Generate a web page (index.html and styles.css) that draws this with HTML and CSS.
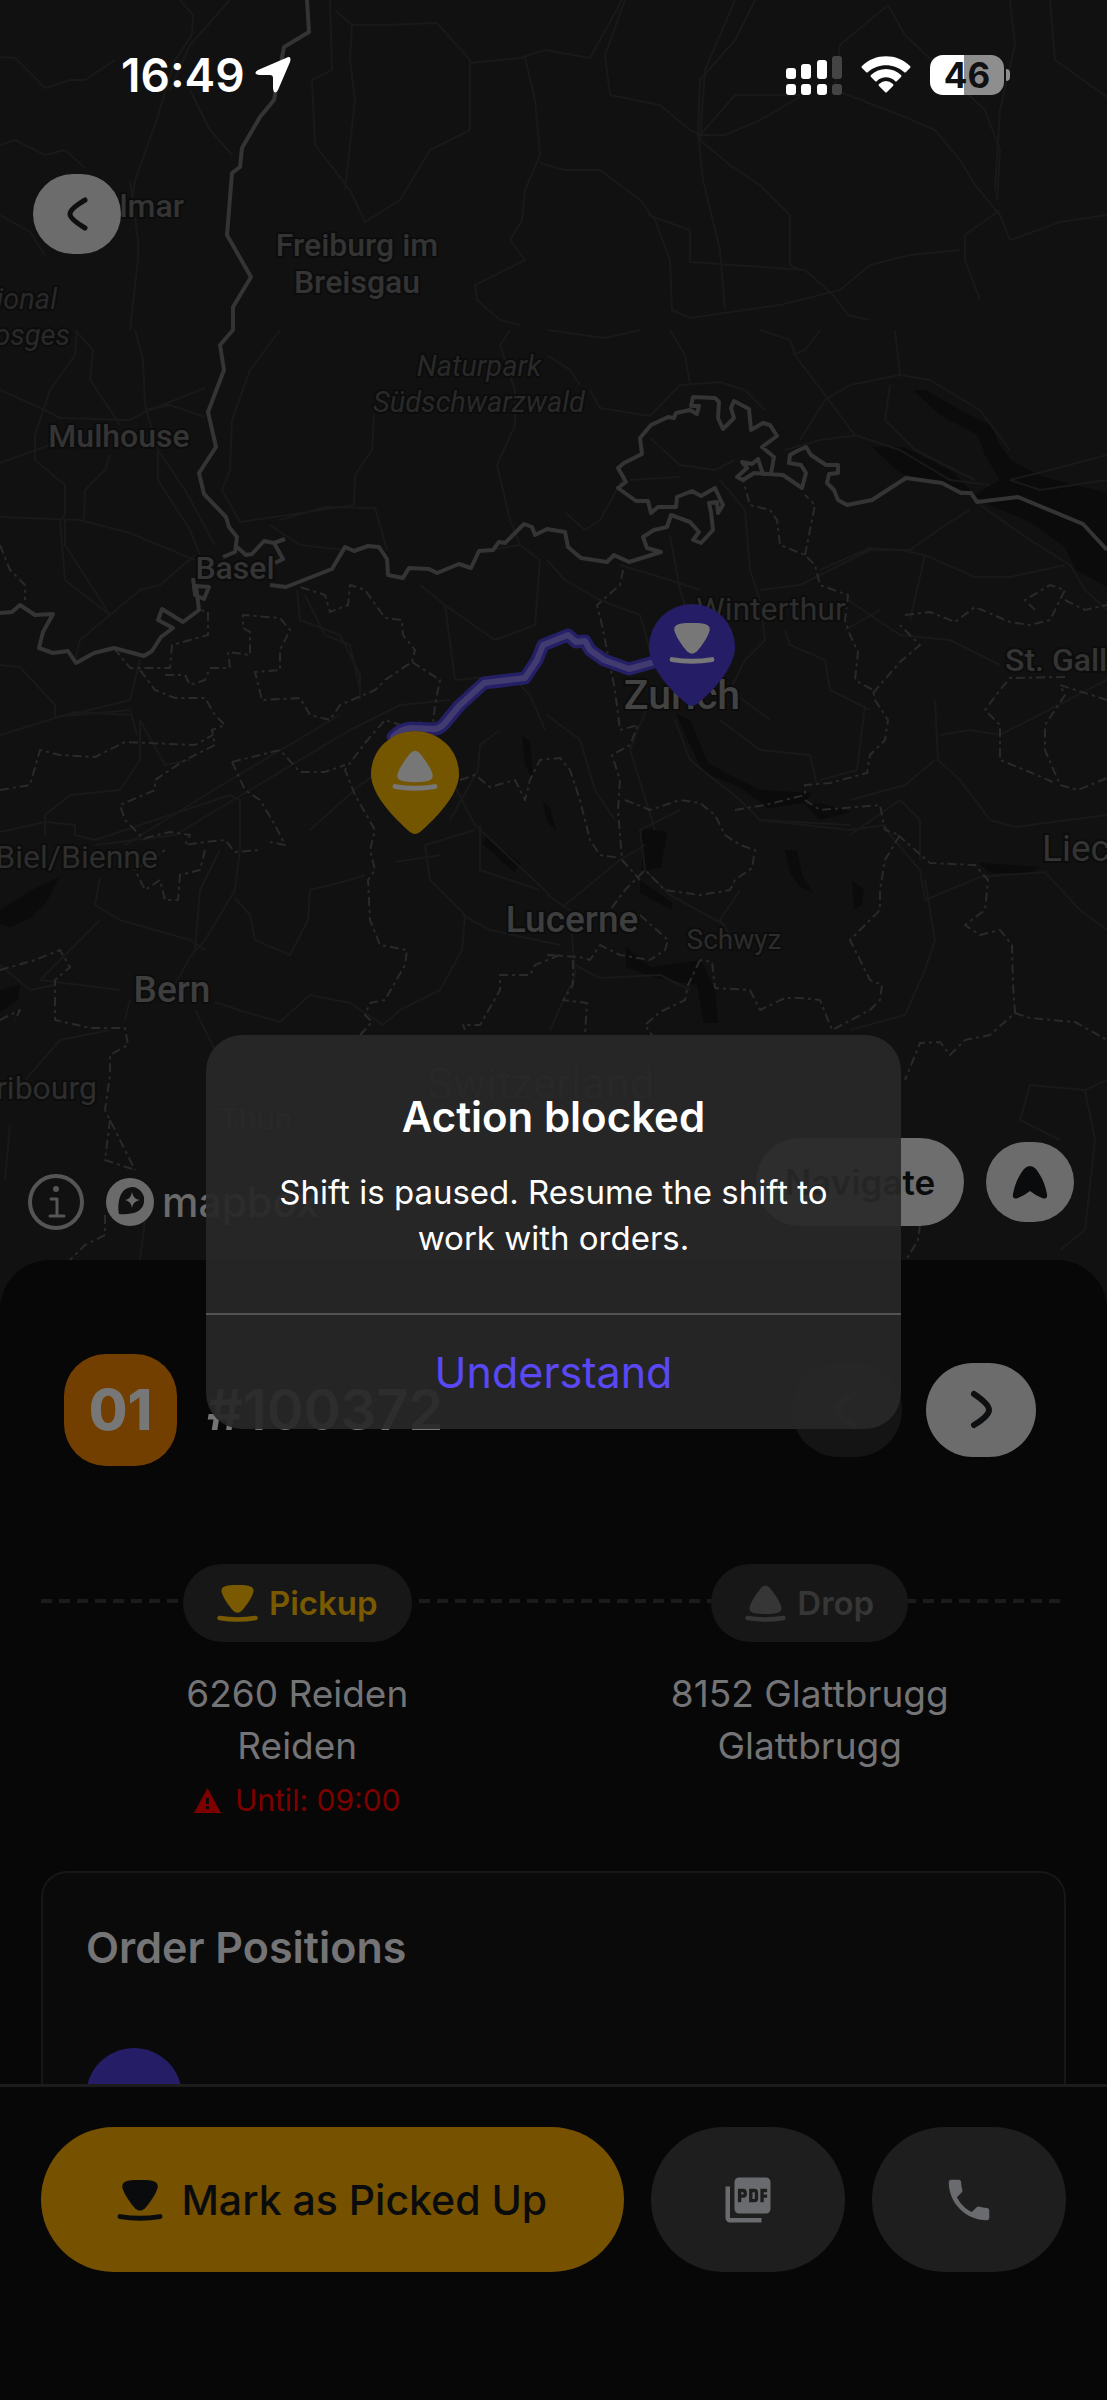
FILE: index.html
```html
<!DOCTYPE html>
<html lang="en">
<head>
	<meta charset="utf-8">
	<meta name="viewport" content="width=device-width, initial-scale=1">
	<title>Order #100372</title>
	<link rel="stylesheet" href="styles.css">
</head>
<body>
	<!-- shared icons -->
	<svg class="sprite" aria-hidden="true">
		<symbol id="pickup" viewBox="0 0 41 38">
			<path d="M4.500 7.500C4 2.500 8 1 20.500 1S37 2.500 36.500 7.500C35 14 29 22 25 26.500Q20.500 31 16 26.500C12 22 6 14 4.500 7.500Z"/>
			<path d="M2.500 34Q20.500 37 38.500 34" fill="none" stroke="currentColor" stroke-width="4.500" stroke-linecap="round"/>
		</symbol>
		<symbol id="drop" viewBox="0 0 41 38">
			<path d="M4.500 23.500C4 28.500 8 30 20.500 30S37 28.500 36.500 23.500C35 17 29 9 25 4Q20.500 -1 16 4C12 9 6 17 4.500 23.500Z"/>
			<path d="M2.500 34Q20.500 37 38.500 34" fill="none" stroke="currentColor" stroke-width="4.500" stroke-linecap="round"/>
		</symbol>
	</svg>

	<div class="screen">
		<!-- map -->
		<svg class="map" viewBox="0 0 1107 1480">
			<g class="water">
				<path d="M913 390L926 390 960 410 990 425 1000 445 1011 460 1043 477 1107 493V587L1076 570 1065 547 1030 522 986 503 975 495 1000 480 985 455 978 435 940 415Z"/>
				<path d="M872 447L904 447 930 460 954 473 972 492 940 483 900 473Z"/>
				<path d="M676 713L690 720 708 763 735 778 761 790 811 793 805 803 768 808 740 787 704 773 690 745Z"/>
				<path d="M805 805L820 803 850 812 820 820Z"/>
				<path d="M642 828L667 832 661 867 642 872Z"/>
				<path d="M59 877L46 903 30 918 11 927 0 924V910L32 890Z"/>
				<path d="M486 837L520 863 514 872 482 843Z"/>
				<path d="M626 947L651 967 701 960 715 990 718 1023 704 1023 697 985 654 977 626 967Z"/>
				<path d="M640 880L672 903 672 910 640 893Z"/>
				<path d="M785 850L797 850 802 875 813 893 800 887 790 872Z"/>
				<path d="M852 880L864 890 862 905 854 910Z"/>
				<path d="M979 863L1040 867 1030 873 990 873Z"/>
				<path d="M0 990L20 985 18 1000 0 1012Z"/>
				<path d="M522 735L530 742 533 780 525 765ZM543 802L550 808 556 830 547 822Z"/>
			</g>
			<g class="road">
				<path d="M180 0L193 15 192 35 175 60 155 125 135 180 130 215M230 0L190 45 170 90M190 90L210 130 232 155M130 180L138 240 138 260 130 330"/>
				<path d="M0 57L15 58 45 88 70 80 85 80 115 60M0 145L15 140 45 155 65 150 85 168M0 215L30 232 45 255"/>
				<path d="M330 0L332 70 312 80 315 145 350 190 365 222 400 200 430 150 470 130 470 60 437 23 385 25 352 25 335 10M352 25L350 60 355 100 345 190"/>
				<path d="M470 63L520 58 545 50 590 58 622 0M525 58L535 100 540 155 525 190 522 220 510 240 525 260 475 285 477 300 500 320 520 325"/>
				<path d="M540 163L565 170 600 170 640 200 655 220 670 260 672 310 690 318 780 305 840 290 870 265 910 255 960 250"/>
				<path d="M625 0L605 55 610 95 660 105 690 130 700 135 735 95 800 95M755 0L735 40 700 80 698 135 703 180 720 250 725 310"/>
				<path d="M700 135L725 135 760 120 800 97M735 0L705 70 700 140 730 165 760 185 790 215 790 265 800 270"/>
				<path d="M888 5L840 45 835 90 900 115 935 130 960 160 975 185 1000 215 1010 240 1060 222 1107 215M888 5L905 35 985 110 1000 150 997 200"/>
				<path d="M1010 0L1015 45 1000 110 995 190M1050 0L1055 60 1107 97M648 215L690 230 690 262 805 270 833 295 848 315 870 320M1000 210L965 235 965 260 980 300"/>
				<path d="M77 330L75 355 50 390 35 435 35 460 65 485 65 515 60 520 65 580 110 615 140 590 160 585 195 555"/>
				<path d="M0 390L45 410 60 418 130 420 145 412 205 388M75 330L93 350 90 380 120 425M135 330L143 360 145 405 158 450 158 480 190 530 200 555M145 410L170 405 205 417"/>
				<path d="M0 463L50 445M110 455L105 470 85 490 84 520M0 517L80 520 130 533 195 560M158 450L185 490 215 545M280 330L250 370 232 420 230 470 222 490 240 522"/>
				<path d="M65 520L65 545 110 615 80 640 75 660M0 665L20 667 55 705 55 717 130 710 137 735M60 717L110 705 130 700 140 660"/>
				<path d="M374 415L372 450 355 475 354 505 240 522M280 520L325 507 375 508 387 550M420 585L445 605 495 640 535 625 540 560 520 545 490 550"/>
				<path d="M270 525L300 545 345 550M297 590L300 620 340 635 360 675 360 700M305 595L325 635 350 645 360 690M445 605L455 680 510 675 530 695 545 730"/>
				<path d="M510 330L500 345 515 390 515 425 497 465 510 520 520 545"/>
				<path d="M0 735L75 712 130 715M45 835L45 815 70 795 120 790 140 760 140 720 165 765 190 760M0 832L45 822 75 825 75 835 95 840 230 795 240 800 240 850"/>
				<path d="M95 845L175 835 250 790 350 730 400 705 450 700M125 845L230 780 340 715M240 850L235 890 205 940 190 957 175 985 180 1000M235 898L250 915 255 940 290 955 308 920 310 890 350 880 365 875"/>
				<path d="M100 878L95 905 120 920 190 940 205 950M195 950L200 890 220 850M215 1002L245 1012 280 1022 310 995 350 1003 383 1025 400 1010 440 990 462 950 465 915 430 880 425 845 475 830"/>
				<path d="M100 920L55 965 40 980 120 990M0 965L30 990 55 985M125 1020L130 1000M215 1050L195 1010M310 830L360 785 410 750M395 862L440 855"/>
				<path d="M420 720L475 825 550 895M450 820L478 770 480 745 500 730M480 825L480 870 510 880 540 890M462 915L490 930 560 945"/>
				<path d="M547 330L605 338 640 330M547 355L570 370 580 385M590 390L600 408 650 416 680 385 720 382 745 390 765 410M670 330L685 355 690 385"/>
				<path d="M760 330L790 340 795 355 855 435 900 450 950 480 990 485M793 355L805 350 820 330M860 435L820 440 785 450M800 440L825 400 850 385 900 375 930 380 980 410 1010 450"/>
				<path d="M895 330L900 375M890 385L885 420 915 450 975 480M1107 455L1050 470 1010 480 1040 490 1107 480M650 438L680 465 715 470 735 460"/>
				<path d="M720 480L745 510 750 570 760 600 765 640 745 660 730 690 770 720M565 512L585 530 600 520 625 475M630 480L680 477"/>
				<path d="M547 560L565 580 600 600 640 615 650 650M620 565L670 580 700 590M670 535L680 590 685 605"/>
				<path d="M760 590L800 585 850 560 870 550 910 550 945 525 970 510M820 570L870 548 900 550 925 555 975 577 1010 577 1065 565"/>
				<path d="M980 505L1030 540 1070 565 1085 590 1107 610M925 555L910 620M848 600L900 635 950 640 1000 665M785 630L790 645 825 660 830 690 870 710"/>
				<path d="M845 630L880 610M547 715L580 740 595 790 615 820M675 720L690 760 740 800 760 820 850 825M650 700L630 750 655 830"/>
				<path d="M720 720L760 750 810 755 817 785M865 705L857 770 820 780M935 700L938 760 960 780 990 820 1015 827 1107 815M935 760L905 785 850 800"/>
				<path d="M940 735L970 730 1000 735 1107 680M760 820L850 830 885 825 890 835 920 870 925 900 980 877 1045 872 1080 910 1107 930"/>
				<path d="M740 890L720 920 740 950M925 880L935 940 925 970 905 1015 850 1030M725 925L670 895 645 870 640 830 680 810"/>
				<path d="M565 905L620 860 645 845M547 895L570 910 575 975 550 1030M575 965L600 978 660 975 690 990M850 835L900 800 920 820 920 860"/>
				<path d="M1107 1080L1085 1090 1030 1085 1020 1120 1060 1140M1085 1090L1095 1140 1085 1230 1060 1250M25 1080L60 1040 110 1030M10 1125L5 1180M145 1220L140 1260"/>
			</g>
			<g class="canton">
				<path d="M0 545L10 570 25 585 25 600M114 648L130 668 170 668 172 645 208 635 208 612 200 610"/>
				<path d="M140 670L155 690 175 698 205 698 215 715 225 725 212 730 215 745 185 760 155 780 155 790 120 805 125 820 145 840"/>
				<path d="M165 675L185 675 190 685 205 680 210 668 230 668 228 652 250 655 250 632 243 628 243 615 280 618 290 630 280 650 280 670 255 672 262 700 300 698 310 715 330 720 340 705 375 690 385 680 412 662 415 650 403 635 402 620 385 618 365 590 350 585 348 605 330 612 325 595 300 587"/>
				<path d="M412 662L440 680 435 705 432 735 385 720 365 743 345 770 355 795 375 830 370 850 375 870 368 880 370 920 380 945 407 950 405 965 385 1000 370 1003 365 1015 372 1022 360 1035"/>
				<path d="M0 790L30 785 40 750 60 755 95 757 125 742 195 745 213 735M232 762L280 750 300 772 325 772 345 765M232 762L245 790 260 800 275 825 285 845 270 842M145 838L170 832 190 835 185 845 205 842 225 840 235 852 260 850M205 850L200 870 180 875 178 900 165 900 160 880 145 890 135 870 165 850"/>
				<path d="M0 970L35 960 60 950 70 967 55 980 55 1020 90 1028 125 1028 128 1045 110 1055 110 1075 105 1110 125 1150 135 1170M0 1020L20 1010 15 1020"/>
				<path d="M460 780L475 775 490 787 515 780 525 800 530 780 540 760 560 758 570 770 580 800 590 840 600 855 620 858"/>
				<path d="M623 570L620 585 597 605 602 625 610 665 615 690 620 730 638 725 630 745 612 755 620 780 618 810 622 860 640 880M625 800L650 810 680 800 700 803 715 815 725 835 740 845 755 850 752 868 735 880 730 890 700 895 665 890 645 870 625 890 610 910"/>
				<path d="M735 810L765 805 805 795 805 785 830 783 867 773 870 755 885 740 888 720 875 700 873 690 855 680 858 652 850 635 845 620 848 595 820 585 815 565 805 555 780 545 777 520 770 510 750 505 743 480M805 555L815 505 805 495M805 800L820 810 880 805 885 830 900 835 885 860 880 890 880 910 860 930 850 940 860 960 870 980 882 985 880 1000 870 1010 832 1030 820 1000 800 998 785 998 760 1010 750 990 715 988 712 962 700 960"/>
				<path d="M898 835L930 863 975 865 988 880 985 910 965 925 980 935 1000 930 1012 945 1013 985 1015 1013 990 1035 965 1040 950 1055 940 1042 920 1043 905 1080M1015 1013L1030 1018 1075 1022 1107 1040"/>
				<path d="M905 615L930 612 955 622 975 607 1010 622 1030 625 1050 620 1065 590 1050 585 1025 600 1035 610M1065 600L1085 610 1107 605M873 693L900 662 920 645 900 625"/>
				<path d="M1107 700L1060 685 1065 695 1045 725 1045 750 1060 785 1078 790 1107 778M1065 677L1010 678 1000 690 985 710 1000 725 1000 760 1025 770 1055 783"/>
				<path d="M547 955L580 957 590 960 600 945 620 955 650 960M573 960L573 985 563 1000 587 1003 585 1035M700 960L688 985 685 1000 660 1012 645 1025 652 1035M560 955L535 965 530 975 500 975 500 990 480 1025 463 1025 465 1030M640 915L668 940 665 950 650 960"/>
				<path d="M110 1120L105 1160 135 1170M105 1215L105 1235 85 1245 65 1265M920 1225L918 1240 905 1262"/>
			</g>
			<g class="border">
				<path d="M307 0L309 32 284 47 274 100 260 117 242 148 240 167 232 173 227 235 251 277 233 307 233 330 220 345 224 370 208 412 216 447 199 473 204 494 226 517 229 527 237 537 235 552 223 557M237 547L246 555 252 554 264 541 274 543 285 539M274 543L283 559 275 563"/>
				<path d="M193 578L195 595 204 599 209 587 196 586 199 610 183 622 162 609 158 620 173 628 161 637 152 651 144 656 114 648 94 653 76 663 68 651 53 653 39 648 43 632 53 614 35 615 20 605 12 612 0 613"/>
				<path d="M270 585L286 587 332 569 345 547 354 551 368 546 379 547 387 559 388 575 403 578 409 568 429 569 437 573 459 564 471 568 479 551 493 550 499 542 505 543 524 524 532 527 535 535 547 529 565 532 568 547 581 558 607 562 614 555 629 562 661 552 647 548 643 537 654 530 667 527 671 515 690 522 699 532 693 540 701 543 713 530 711 512 709 503 717 502 718 513 723 505 715 488 701 496 692 491 677 497 676 507 658 507 651 513 648 501 636 501 618 488 626 482 618 468 624 463 642 454 640 438 651 425 668 417 674 418 676 413 690 410 697 414 699 406 691 406 693 397 715 398 719 402 718 418 723 429 734 418 731 408 734 401 749 409 751 430 763 423 770 425 777 436 762 447 774 457 771 474 763 474 758 459 752 464 742 462 747 468 737 477 743 480 754 473 783 475 802 488 806 473 801 465 789 463 790 455 797 451 806 447 811 455 826 465 838 465 838 473 829 474 827 483 834 490 838 500 847 505 872 500 906 478 942 483 961 493 971 493 977 502 1018 497 1083 524 1107 550"/>
			</g>
			<g class="label">
				<text x="184" y="217" text-anchor="end">Colmar</text>
				<text x="357" y="256" text-anchor="middle">Freiburg im</text>
				<text x="357" y="293" text-anchor="middle">Breisgau</text>
				<text x="119" y="447" text-anchor="middle">Mulhouse</text>
				<text x="235" y="579" text-anchor="middle">Basel</text>
				<text x="771" y="620" text-anchor="middle" class="dim">Winterthur</text>
				<text x="1005" y="671">St. Gallen</text>
				<text x="1042" y="861" class="country">Liechtenstein</text>
				<text x="158" y="868" text-anchor="end" class="dim">Biel/Bienne</text>
				<text x="572" y="932" text-anchor="middle" class="city">Lucerne</text>
				<text x="734" y="949" text-anchor="middle" class="small">Schwyz</text>
				<text x="172" y="1002" text-anchor="middle" class="city">Bern</text>
				<text x="97" y="1099" text-anchor="end" class="dim">Fribourg</text>
				<text x="541" y="1099" text-anchor="middle" class="country switzerland">Switzerland</text>
				<text x="256" y="1130" text-anchor="middle">Thun</text>
				<text x="57" y="309" text-anchor="end" class="park">régional</text>
				<text x="70" y="345" text-anchor="end" class="park">Vosges</text>
				<text x="479" y="376" text-anchor="middle" class="park">Naturpark</text>
				<text x="479" y="412" text-anchor="middle" class="park">Südschwarzwald</text>
				<text x="682" y="709" text-anchor="middle" class="capital">Zurich</text>
			</g>
			<g class="route">
				<path class="route-line" d="M393 737Q400 729 411 728L432 729Q439 730 445 723L459 706 484 683 525 678 537 660 543 645 568 635 576 642 585 641 590 650 604 660 629 669 654 662"/>
				<path class="route-core" d="M393 737Q400 729 411 728L432 729Q439 730 445 723L459 706 484 683 525 678 537 660 543 645 568 635 576 642 585 641 590 650 604 660 629 669 654 662"/>
			</g>
			<g class="pin" transform="translate(415 731)">
				<path class="pin-drop" d="M-5 101C-20 88-44 64-44 43A44 43 0 0 1 44 43C44 64 20 88 5 101Q0 105-5 101Z"/>
				<use href="#drop" x="-23" y="18" width="46" height="42"/>
			</g>
			<g class="pin" transform="translate(692 604)">
				<path class="pin-pickup" d="M-5 100C-20 88-43 64-43 43A43 43 0 0 1 43 43C43 64 20 88 5 100Q0 104-5 100Z"/>
				<use href="#pickup" x="-23" y="18" width="46" height="42"/>
			</g>
		</svg>

		<header class="status">
			<div class="clock">
				<span>16:49</span>
				<svg width="36" height="36" viewBox="0 0 36 36"><path d="M31 1Q37-2 35 5L23 33Q19 39 18 31V21Q18 18 15 18H5Q-3 17 3 13Z" fill="#fff"/></svg>
			</div>
			<div class="signals">
				<svg width="56" height="40" viewBox="0 0 56 40" fill="#fff">
					<rect x="0" y="13" width="10" height="11" rx="3"/><rect x="15" y="9" width="10" height="15" rx="3"/><rect x="31" y="5" width="10" height="19" rx="3"/><rect x="46" y="1" width="10" height="23" rx="3" fill="#444"/>
					<rect x="0" y="29" width="10" height="11" rx="3"/><rect x="15" y="29" width="10" height="11" rx="3"/><rect x="31" y="29" width="10" height="11" rx="3"/><rect x="46" y="29" width="10" height="11" rx="3" fill="#444"/>
				</svg>
				<svg width="50" height="38" viewBox="0 0 50 38" fill="#fff">
					<path d="M1 10C14-3 36-3 49 10Q50 11 49 12L45 16Q44 17 43 16C33 7 17 7 7 16Q6 17 5 16L1 12Q0 11 1 10Z"/>
					<path d="M10 19C18 11 32 11 40 19Q41 20 40 21L36 25Q35 26 34 25C29 20 21 20 16 25Q15 26 14 25L10 21Q9 20 10 19Z"/>
					<path d="M18 28Q25 22 32 28Q33 29 32 30L26 36Q25 37 24 36L18 30Q17 29 18 28Z"/>
				</svg>
				<div class="battery"><span>46</span></div>
			</div>
		</header>

		<main class="map-area">
			<button type="button" class="round-btn" aria-label="Back">
				<svg width="88" height="80" viewBox="0 0 88 80"><path d="M52 26Q37 35 37 40T52 54" class="chevron"/></svg>
			</button>
			<div class="map-controls">
				<div class="attribution">
					<svg width="56" height="56" viewBox="0 0 56 56" fill="none" stroke="#555" stroke-width="4">
						<circle cx="28" cy="28" r="26"/>
						<circle cx="28" cy="15" r="3" fill="#555" stroke="none"/>
						<path d="M23 25H29V42M22 42H36" stroke-width="3" stroke-linecap="round" stroke-linejoin="round"/>
					</svg>
					<div class="mapbox">
						<svg width="48" height="48" viewBox="0 0 48 48">
							<circle cx="24" cy="24" r="24" fill="#6a6a6a"/>
							<path d="M13 36C11 24 14 9 27 9A13 13 0 0 1 38 24C37 34 26 37 13 36Z" fill="#111"/>
							<path d="M26 14Q27 21 34 22 27 23 26 30 25 23 19 22 25 21 26 14Z" fill="#6a6a6a"/>
						</svg>
						<span>mapbox</span>
					</div>
				</div>
				<div class="map-actions">
					<button type="button" class="navigate">Navigate</button>
					<button type="button" class="round-btn" aria-label="Center on my position">
						<svg width="88" height="80" viewBox="0 0 88 80"><path d="M38 27Q44 21 50 27C56 35 59 42 61 52Q62 58 56 56Q49 53 44 49Q39 53 32 56Q26 58 27 52C29 42 32 35 38 27Z" fill="#0a0b0d"/></svg>
					</button>
				</div>
			</div>
		</main>

		<section class="sheet">
			<div class="order-head">
				<span class="stop">01</span>
				<h1>#100372</h1>
				<div class="pager">
					<button type="button" class="pager-btn disabled" aria-label="Previous order" disabled>
						<svg width="110" height="94" viewBox="0 0 110 94"><path d="M62 31Q45 42 45 47T62 63" class="chevron"/></svg>
					</button>
					<button type="button" class="pager-btn" aria-label="Next order">
						<svg width="110" height="94" viewBox="0 0 110 94"><path d="M48 31Q63 41 63 47T48 62" class="chevron"/></svg>
					</button>
				</div>
			</div>

			<div class="stops">
				<div class="stop-col">
					<span class="chip active"><svg width="41" height="38"><use href="#pickup"/></svg>Pickup</span>
					<p>6260 Reiden<br>Reiden</p>
					<div class="until">
						<svg width="27" height="25" viewBox="0 0 27 25"><path d="M13.500 0L27 25H0ZM12 10V16H15V10ZM12 18V21H15V18Z" fill="#7d0000" fill-rule="evenodd"/></svg>
						Until: 09:00
					</div>
				</div>
				<div class="stop-col">
					<span class="chip"><svg width="41" height="38"><use href="#drop"/></svg>Drop</span>
					<p>8152 Glattbrugg<br>Glattbrugg</p>
				</div>
			</div>

			<div class="positions">
				<h2>Order Positions</h2>
				<div class="avatar"></div>
			</div>
		</section>

		<footer class="actions">
			<button type="button" class="primary"><svg width="46" height="42"><use href="#pickup"/></svg>Mark as Picked Up</button>
			<button type="button" class="secondary" aria-label="Open PDF">
				<svg width="54" height="54" viewBox="0 0 24 24"><path fill="#6a6b6e" d="M20 2H8c-1.100 0-2 .9-2 2v12c0 1.100.9 2 2 2h12c1.100 0 2-.9 2-2V4c0-1.100-.9-2-2-2zm-8.500 7.500c0 .83-.67 1.500-1.500 1.500H9v2H7.500V7H10c.83 0 1.500.67 1.500 1.500v1zm5 2c0 .83-.67 1.500-1.500 1.500h-2.500V7H15c.83 0 1.500.67 1.500 1.500v3zm4-3H19v1h1.500V11H19v2h-1.500V7h3v1.500zM9 9.500h1v-1H9v1zM4 6H2v14c0 1.100.9 2 2 2h14v-2H4V6zm10 5.500h1v-3h-1v3z"/></svg>
			</button>
			<button type="button" class="secondary" aria-label="Call">
				<svg width="54" height="54" viewBox="0 0 24 24"><path fill="#6a6b6e" d="M6.620 10.790c1.440 2.830 3.760 5.140 6.590 6.590l2.200-2.200c.27-.27.67-.36 1.020-.24 1.120.37 2.330.57 3.570.57.55 0 1 .45 1 1V20c0 .55-.45 1-1 1-9.390 0-17-7.610-17-17 0-.55.45-1 1-1h3.500c.55 0 1 .45 1 1 0 1.250.2 2.450.57 3.570.11.35.03.74-.25 1.020l-2.200 2.200z"/></svg>
			</button>
		</footer>

		<div class="overlay">
			<div class="dialog" role="alertdialog" aria-labelledby="dialog-title" aria-describedby="dialog-text">
				<div class="dialog-body">
					<h2 id="dialog-title">Action blocked</h2>
					<p id="dialog-text">Shift is paused. Resume the shift to work with orders.</p>
				</div>
				<button type="button">Understand</button>
			</div>
		</div>
	</div>
</body>
</html>
```

FILE: styles.css
```css
* {
	box-sizing: border-box;
}

body {
	margin: 0;
	background-color: #070707;
	color: #747476;
	font-family: Inter, "Liberation Sans", sans-serif;
}

h1, h2, p {
	margin: 0;
}

button {
	border: 0;
	padding: 0;
	font-family: inherit;
	cursor: pointer;
}

svg {
	display: block;
}

.sprite {
	position: absolute;
	width: 0;
	height: 0;
}

symbol, use {
	fill: currentColor;
}

.screen {
	position: relative;
	display: flex;
	flex-direction: column;
	min-height: 100vh;
	background-color: #111;
	overflow: hidden;
}

/* map */
.map {
	position: absolute;
	top: 0;
	left: 0;
	width: 100%;
	height: auto;
	fill: none;
	stroke-linejoin: round;
}

.water {
	fill: #0b0b0b;
}

.road {
	stroke: #191919;
	stroke-width: 2;
}

.canton {
	stroke: #2a2a2a;
	stroke-width: 2;
	stroke-dasharray: 9 4 3 4;
}

.border {
	stroke: #343434;
	stroke-width: 4;
}

.label text {
	font-family: Roboto, sans-serif;
	font-size: 32px;
	font-weight: 500;
	fill: #343434;
	stroke: #0c0c0c;
	stroke-width: 4px;
	paint-order: stroke;
}

.label .dim {
	font-weight: 400;
	fill: #2e2e2e;
}

.label .small {
	font-size: 28px;
	font-weight: 400;
	fill: #2c2c2c;
}

.label .city {
	font-size: 37px;
	fill: #3e3e3e;
}

.label .capital {
	font-size: 41px;
	fill: #424242;
}

.label .country {
	font-size: 37px;
	font-weight: 400;
}

.label .switzerland {
	font-size: 44px;
}

.label .park {
	font-size: 29px;
	font-style: italic;
	font-weight: 400;
	fill: #292929;
}

.route {
	stroke-linecap: round;
}

.route-line {
	stroke: #251f66;
	stroke-width: 13;
}

.route-core {
	stroke: #413b70;
	stroke-width: 6;
}

.pin {
	color: #777;
}

.pin-drop {
	fill: #755600;
}

.pin-pickup {
	fill: #251d66;
}

/* status bar */
.status {
	position: relative;
	display: flex;
	justify-content: space-between;
	align-items: center;
	height: 150px;
	padding: 0 103px 0 121px;
	color: #fff;
}

.clock {
	display: flex;
	align-items: center;
	gap: 10px;
	font-size: 46px;
	font-weight: 600;
}

.signals {
	display: flex;
	align-items: center;
	gap: 19px;
}

.battery {
	position: relative;
	width: 74px;
	height: 40px;
	border-radius: 13px;
	background: linear-gradient(to right, #fff 46%, #8e8e8e 46%);
	color: #111;
	font-size: 35px;
	font-weight: 700;
	line-height: 40px;
	text-align: center;
}

.battery::after {
	content: "";
	position: absolute;
	top: 14px;
	right: -6px;
	width: 4px;
	height: 12px;
	border-radius: 0 4px 4px 0;
	background-color: #8e8e8e;
}

.map-area {
	position: relative;
	flex: 1;
	display: flex;
	flex-direction: column;
	justify-content: space-between;
	align-items: flex-start;
	padding: 24px 33px 30px;
}

.round-btn {
	border-radius: 41px;
	background-color: #6c6c6c;
}

.chevron {
	fill: none;
	stroke: #0e0f11;
	stroke-width: 5;
	stroke-linecap: round;
	stroke-linejoin: round;
}

.map-controls {
	display: flex;
	justify-content: space-between;
	align-items: center;
	align-self: stretch;
	height: 96px;
}

.attribution {
	display: flex;
	align-items: center;
	gap: 22px;
	margin: 40px 0 0 -5px;
}

.mapbox {
	display: flex;
	align-items: center;
	gap: 8px;
	color: #6a6a6a;
	font-size: 41px;
	font-weight: 500;
	line-height: 48px;
}

.map-actions {
	display: flex;
	align-items: center;
	gap: 22px;
}

.navigate {
	width: 208px;
	height: 88px;
	border-radius: 44px;
	background-color: #6e6e6e;
	color: #0a0b0d;
	font-size: 35px;
	font-weight: 600;
}

/* bottom sheet */
.sheet {
	position: relative;
	padding: 94px 41px 0;
	border-radius: 50px 50px 0 0;
	background-color: #070707;
}

.order-head {
	display: flex;
	align-items: center;
	gap: 30px;
	padding: 0 30px 0 23px;
}

.stop {
	width: 113px;
	border-radius: 42px;
	background-color: #733f00;
	color: #777;
	font-size: 56px;
	font-weight: 800;
	line-height: 112px;
	text-align: center;
}

h1 {
	font-size: 56px;
	font-weight: 600;
}

.pager {
	display: flex;
	gap: 24px;
	margin-left: auto;
}

.pager-btn {
	border-radius: 47px;
	background-color: #6c6c6c;
}

.pager-btn .chevron {
	stroke-width: 6;
}

.disabled {
	background-color: #141414;
}

.disabled .chevron {
	stroke: #2a2a2a;
}

/* the dashed line runs behind both chips */
.stops {
	display: grid;
	grid-template-columns: 1fr 1fr;
	margin-top: 98px;
	background: linear-gradient(to right, #1b1b1b 11px, transparent 11px) 0 35px / 18px 4px repeat-x;
}

.stop-col {
	display: flex;
	flex-direction: column;
	align-items: center;
	text-align: center;
}

.stop-col p {
	margin-top: 26px;
	font-size: 37px;
	line-height: 52px;
}

.chip {
	display: flex;
	align-items: center;
	gap: 11px;
	height: 78px;
	padding: 0 34px;
	border-radius: 39px;
	background-color: #171717;
	color: #363636;
	font-size: 33px;
	font-weight: 600;
}

.active {
	color: #7a5a00;
}

.until {
	display: flex;
	align-items: center;
	gap: 14px;
	margin-top: 6px;
	color: #7d0000;
	font-size: 30px;
	line-height: 44px;
}

.positions {
	height: 213px;
	margin-top: 49px;
	padding: 43px;
	overflow: hidden;
	border: 2px solid #171717;
	border-bottom: 0;
	border-radius: 26px 26px 0 0;
	background-color: #0a0a0a;
}

.positions h2 {
	font-size: 43px;
	font-weight: 600;
	line-height: 62px;
}

.avatar {
	width: 96px;
	height: 96px;
	margin-top: 70px;
	border-radius: 50%;
	background-color: #251d66;
}

.actions {
	position: relative;
	display: grid;
	grid-template-columns: 3fr 1fr 1fr;
	gap: 27px;
	padding: 40px 41px 128px;
	border-top: 3px solid #1c1c1c;
	background-color: #070707;
}

.actions button {
	display: flex;
	justify-content: center;
	align-items: center;
	height: 145px;
	border-radius: 73px;
}

.actions .primary {
	gap: 18px;
	background-color: #755100;
	color: #0a0b0d;
	font-size: 41px;
	font-weight: 500;
}

.actions .secondary {
	background-color: #1e1e1e;
}

/* alert */
.overlay {
	position: absolute;
	top: 0;
	right: 0;
	bottom: 0;
	left: 0;
	display: grid;
	place-items: center;
	padding-top: 64px;
}

.dialog {
	width: 63%;
	max-width: 695px;
	overflow: hidden;
	border-radius: 36px;
	background-color: rgba(40, 40, 40, .93);
	color: #fff;
	text-align: center;
}

.dialog-body {
	padding: 54px 64px 52px;
}

.dialog h2 {
	font-size: 42px;
	font-weight: 600;
	line-height: 56px;
}

.dialog p {
	margin-top: 24px;
	font-size: 33px;
	line-height: 46px;
}

.dialog button {
	width: 100%;
	height: 116px;
	border-top: 2px solid #535353;
	background-color: transparent;
	color: #5a48f5;
	font-size: 43px;
}
```
